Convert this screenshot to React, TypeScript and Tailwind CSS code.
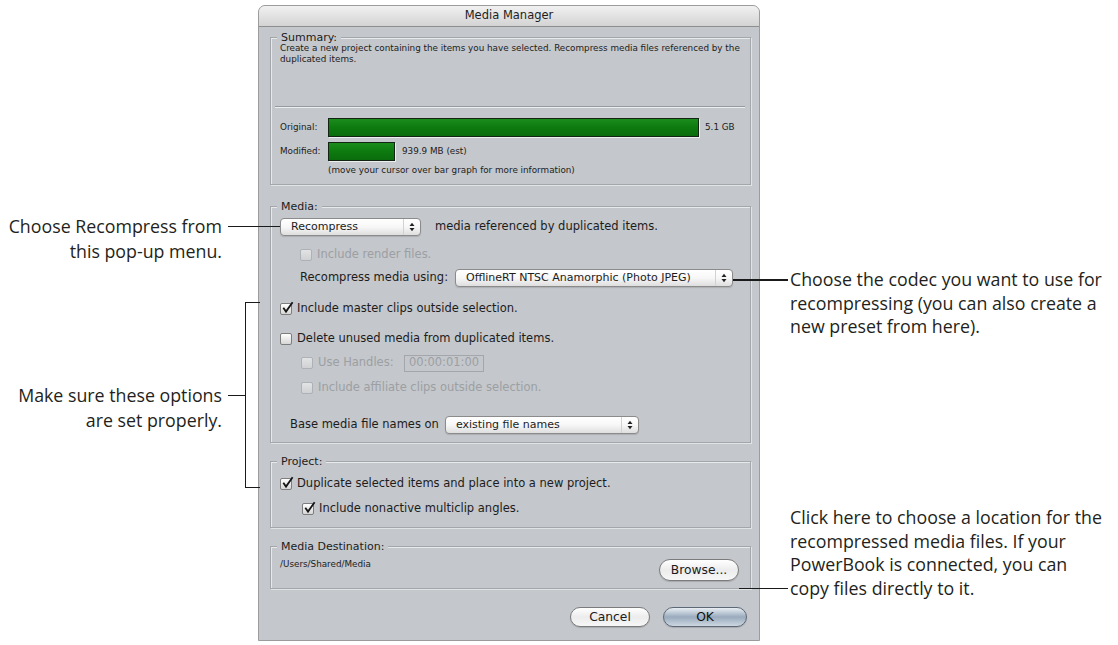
import type { ReactNode } from "react";

const ui = "font-['DejaVu_Sans',sans-serif]";
const note = "font-['Open_Sans',sans-serif] text-[17.8px] text-[#231f20]";
const dialogBg = "bg-[#c4c7cb]";

function Check({ checked, disabled }: { checked?: boolean; disabled?: boolean }) {
  return (
    <span
      className={`relative inline-block w-[12px] h-[12px] shrink-0 rounded-[2px] border ${
        disabled
          ? "border-[#aeb1b5] bg-linear-to-b from-[#e2e3e5] to-[#cfd1d3]"
          : "border-[#7d7d7d] bg-linear-to-b from-white to-[#d6d6d6]"
      }`}
    >
      {checked && (
        <svg className="absolute -top-[3px] left-0 w-[13px] h-[13px]" viewBox="0 0 13 13">
          <path d="M2.3 6.8 L5 10.6 L11.6 1.2" fill="none" stroke="#151515" strokeWidth="1.8" />
        </svg>
      )}
    </span>
  );
}

function Option({ label, checked, disabled, className = "" }: { label: string; checked?: boolean; disabled?: boolean; className?: string }) {
  return (
    <div className={`flex items-center h-[18px] gap-[5px] ${className}`}>
      <Check checked={checked} disabled={disabled} />
      <span className={disabled ? "text-[#9c9fa3]" : "text-[#1c1c1c]"}>{label}</span>
    </div>
  );
}

function Popup({ label, className }: { label: string; className: string }) {
  return (
    <div
      className={`flex items-center h-[18px] rounded-[4px] border border-[#8b8b8b] bg-linear-to-b from-white via-[#f7f7f7] to-[#dedede] shadow-[0_1px_1px_rgba(0,0,0,0.12)] ${className}`}
    >
      <span className="flex-1 pl-[10px] text-[11px] text-[#1c1c1c] whitespace-nowrap overflow-hidden">{label}</span>
      <span className="w-[17px] h-full flex items-center justify-center border-l border-[#d2d2d2]">
        <svg width="6" height="10" viewBox="0 0 6 10">
          <path d="M0.5 4 L3 0.8 L5.5 4Z M0.5 6 L3 9.2 L5.5 6Z" fill="#222" />
        </svg>
      </span>
    </div>
  );
}

function Pill({ label, className, primary }: { label: string; className: string; primary?: boolean }) {
  return (
    <div
      className={`flex items-center justify-center rounded-full border text-[12.3px] ${
        primary
          ? "border-[#5d6876] bg-linear-to-b from-[#e9eef3] via-[#9aabbd] to-[#cdd7e1] text-[#111]"
          : "border-[#7b7b7b] bg-linear-to-b from-white via-[#ececec] to-[#f7f7f7] text-[#1c1c1c]"
      } shadow-[0_1px_1px_rgba(0,0,0,0.15)] ${className}`}
    >
      {label}
    </div>
  );
}

function Group({ title, className = "", children }: { title: string; className?: string; children: ReactNode }) {
  return (
    <div className={`relative border border-[#a3a6aa] shadow-[inset_1px_1px_0_rgba(255,255,255,0.6),1px_1px_0_rgba(255,255,255,0.5)] pl-[9px] ${className}`}>
      <span className={`absolute -top-[7px] left-[6px] px-[4px] leading-[13px] text-[11px] text-[#1c1c1c] ${dialogBg}`}>
        {title}
      </span>
      {children}
    </div>
  );
}

function Bar({ className }: { className: string }) {
  return (
    <div className={`h-[19px] border border-[#142414] bg-linear-to-b from-[#1a8c1c] via-[#0d7a0f] to-[#0a6c0c] shadow-[1px_1px_0_rgba(255,255,255,0.7)] ${className}`} />
  );
}

function Dialog() {
  return (
    <div className={`w-[502px] h-[636px] mt-[5px] shrink-0 flex flex-col rounded-t-[7px] border border-[#9c9c9c] ${dialogBg} ${ui} text-[11.5px] overflow-hidden`}>
      <div className="h-[21px] shrink-0 flex items-center justify-center border-b border-[#8e8e8e] bg-linear-to-b from-[#f1f1f1] to-[#d3d3d3] text-[11.5px] text-[#1e1e1e]">
        Media Manager
      </div>

      <div className="flex flex-col pl-[11px] pr-[8px]">
        {/* Summary */}
        <Group title="Summary:" className="mt-[10px] pt-[5px] pb-[8px]">
          <div className="text-[8.8px] leading-[11px] text-[#1c1c1c] whitespace-nowrap">
            Create a new project containing the items you have selected. Recompress media files referenced by the
            <br />
            duplicated items.
          </div>
          <div className="mt-[41px] -ml-[5px] mr-[5px] h-px bg-[#979a9e] shadow-[0_1px_0_#eceef0]" />
          <div className="mt-[11px] flex items-center text-[8.8px] text-[#1c1c1c]">
            <span className="w-[48px]">Original:</span>
            <Bar className="w-[371px]" />
            <span className="ml-[6px]">5.1 GB</span>
          </div>
          <div className="mt-[5px] flex items-center text-[8.8px] text-[#1c1c1c]">
            <span className="w-[48px]">Modified:</span>
            <Bar className="w-[67px]" />
            <span className="ml-[7px]">939.9 MB (est)</span>
          </div>
          <div className="mt-[4px] pl-[48px] text-[8.8px] leading-[11px] text-[#1c1c1c]">
            (move your cursor over bar graph for more information)
          </div>
        </Group>

        {/* Media */}
        <Group title="Media:" className="mt-[21px] pt-[11px] pb-[8px]">
          <div className="flex items-center h-[18px]">
            <Popup label="Recompress" className="w-[141px]" />
            <span className="ml-[14px] text-[#1c1c1c]">media referenced by duplicated items.</span>
          </div>
          <Option label="Include render files." disabled className="mt-[10px] ml-[20px]" />
          <div className="mt-[5px] ml-[20px] flex items-center h-[18px]">
            <span className="text-[#1c1c1c]">Recompress media using:</span>
            <Popup label="OfflineRT NTSC Anamorphic (Photo JPEG)" className="ml-[7px] w-[278px]" />
          </div>
          <Option label="Include master clips outside selection." checked className="mt-[13px]" />
          <Option label="Delete unused media from duplicated items." className="mt-[12px]" />
          <div className="mt-[6px] ml-[21px] flex items-center h-[18px]">
            <Check disabled />
            <span className="ml-[5px] w-[86px] text-[#9c9fa3]">Use Handles:</span>
            <span className="w-[80px] h-[17px] flex items-center justify-center border border-[#a3a6aa] text-[#9c9fa3]">
              00:00:01:00
            </span>
          </div>
          <Option label="Include affiliate clips outside selection." disabled className="mt-[7px] ml-[21px]" />
          <div className="mt-[19px] ml-[10px] flex items-center h-[18px]">
            <span className="text-[#1c1c1c]">Base media file names on</span>
            <Popup label="existing file names" className="ml-[6px] w-[194px]" />
          </div>
        </Group>

        {/* Project */}
        <Group title="Project:" className="mt-[18px] pt-[13px] pb-[9px]">
          <Option label="Duplicate selected items and place into a new project." checked />
          <Option label="Include nonactive multiclip angles." checked className="mt-[7px] ml-[22px]" />
        </Group>

        {/* Media Destination */}
        <Group title="Media Destination:" className="mt-[18px] pt-[12px] pb-[7px] pr-[11px]">
          <div className="flex items-start justify-between">
            <span className="text-[8.8px] leading-[11px] text-[#1c1c1c]">/Users/Shared/Media</span>
            <Pill label="Browse..." className="w-[80px] h-[22px]" />
          </div>
        </Group>

        <div className="mt-[18px] mr-[4px] flex justify-end gap-[13px]">
          <Pill label="Cancel" className="w-[80px] h-[20px]" />
          <Pill label="OK" primary className="w-[84px] h-[20px]" />
        </div>
      </div>
    </div>
  );
}

export default function App() {
  return (
    <div className="w-[1118px] h-[645px] bg-white flex overflow-hidden">
      {/* left notes */}
      <div className={`w-[258px] shrink-0 flex flex-col ${note}`}>
        <div className="mt-[213.5px] flex justify-end items-start">
          <div className="text-right leading-[25px]">
            Choose Recompress from
            <br />
            this pop-up menu.
          </div>
          <div className="relative z-10 mt-[12px] ml-[6px] -mr-[22px] w-[52px] h-[1.5px] bg-[#1a1a1a]" />
        </div>
        <div className="mt-[38.5px] flex justify-end items-start">
          <div className="mt-[80.5px] text-right leading-[25px]">
            Make sure these options
            <br />
            are set properly.
          </div>
          <div className="mt-[92.5px] ml-[6px] w-[17px] h-[1.5px] bg-[#1a1a1a]" />
          <div className="relative z-10 -mr-[2px] w-[15px] h-[186px] border-l-[1.5px] border-y-[1.5px] border-[#1a1a1a]" />
        </div>
      </div>

      <Dialog />

      {/* right notes */}
      <div className={`flex-1 flex flex-col ${note}`}>
        <div className="mt-[268.25px] flex items-start">
          <div className="relative z-10 mt-[11px] -ml-[27px] w-[55px] h-[1.5px] bg-[#1a1a1a]" />
          <div className="ml-[2px] leading-[23.5px] whitespace-nowrap">
            Choose the codec you want to use for
            <br />
            recompressing (you can also create a
            <br />
            new preset from here).
          </div>
        </div>
        <div className="mt-[167.5px] flex items-end">
          <div className="relative z-10 mb-[11px] -ml-[21px] w-[49px] h-[1.5px] bg-[#1a1a1a]" />
          <div className="ml-[2px] leading-[23.5px] whitespace-nowrap">
            Click here to choose a location for the
            <br />
            recompressed media files. If your
            <br />
            PowerBook is connected, you can
            <br />
            copy files directly to it.
          </div>
        </div>
      </div>
    </div>
  );
}
